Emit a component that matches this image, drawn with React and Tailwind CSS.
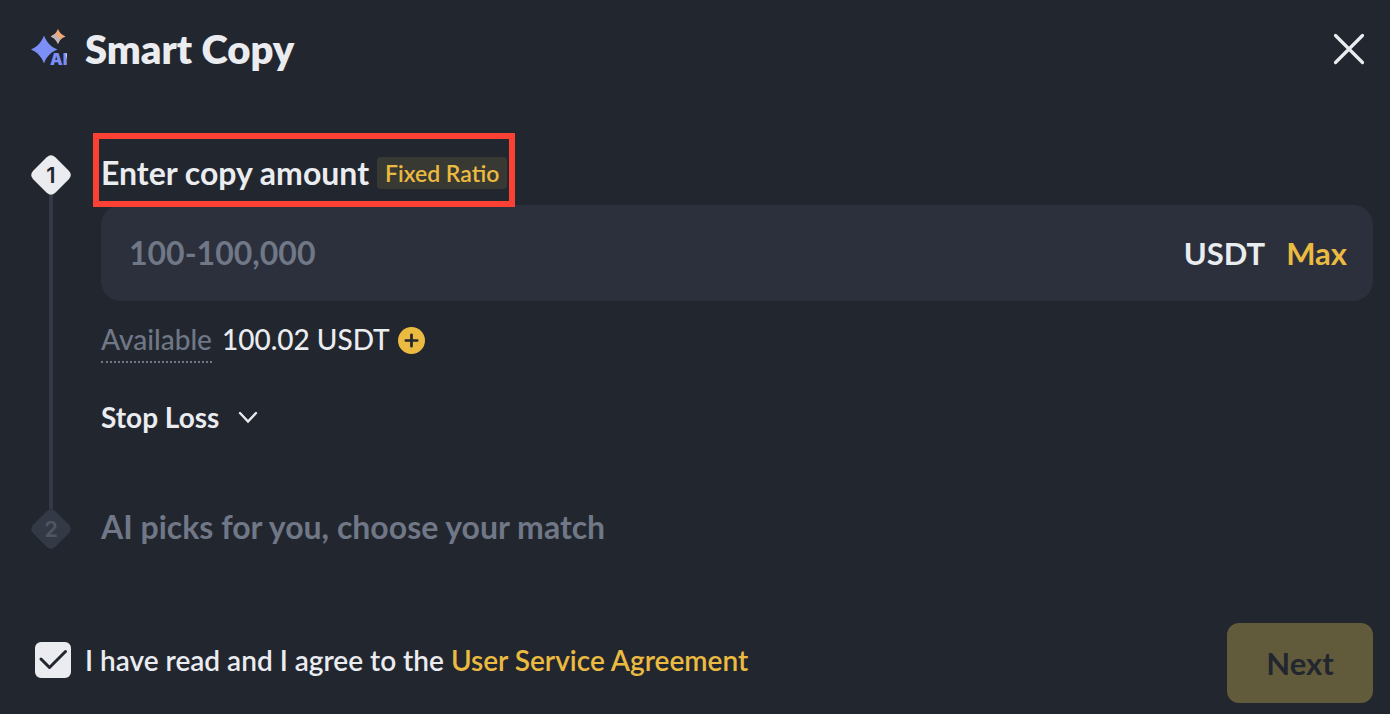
import { useState } from "react";

const SmartCopyIcon = () => (
  <svg width="38" height="40" viewBox="0 0 38 40" aria-hidden="true">
    <path
      d="M13 6.5C15.6 13.2 19 17.2 26.5 20.6C19 23.8 15.6 27.8 13 34.5C10.4 27.8 7 23.8 0 20.6C7 17.2 10.4 13.2 13 6.5Z"
      fill="#7b8ff7"
    />
    <path
      d="M27 0C28.7 3.9 30.5 5.7 34.6 7.5C30.5 9.2 28.7 11.1 27 15C25.3 11.1 23.5 9.2 19.6 7.5C23.5 5.7 25.3 3.9 27 0Z"
      fill="#efa878"
    />
    <path
      d="M27 15C25.3 11.1 23.5 9.2 19.6 7.5C21.4 6.7 22.7 6 23.7 5L29.2 10.5C28.3 11.8 27.7 13.3 27 15Z"
      fill="#b9b7bf"
    />
    <text
      x="19"
      y="36"
      fill="#7b8ff7"
      stroke="#22262f"
      strokeWidth="2"
      paintOrder="stroke"
      className="font-['Inter'] text-[16px] font-black"
    >
      AI
    </text>
    <path d="M34.4 24.6H36V31Z" fill="#cfcfdc" />
  </svg>
);

const StepMarker = ({ number, active }) => (
  <div className="relative flex size-10 shrink-0 items-center justify-center">
    <svg className="absolute inset-0" width="40" height="40" viewBox="0 0 40 40" aria-hidden="true">
      <path
        d="M15.7 2.2Q20-1.8 24.3 2.2L37.8 15.7Q41.8 20 37.8 24.3L24.3 37.8Q20 41.8 15.7 37.8L2.2 24.3Q-1.8 20 2.2 15.7Z"
        fill={active ? "#eaecef" : "#343a45"}
      />
    </svg>
    <span
      className={
        active
          ? "relative font-['Inter',sans-serif] text-[22px] leading-6 font-semibold text-[#22262f]"
          : "relative font-['Inter',sans-serif] text-[22px] leading-6 font-semibold text-[#4f5663]"
      }
    >
      {number}
    </span>
  </div>
);

export default function App() {
  const [amount, setAmount] = useState("");
  const [agreed, setAgreed] = useState(true);

  return (
    <main className="min-h-screen bg-[#22262f] font-['Lato',sans-serif] text-[#eaecef]">
      <header className="flex h-[98px] items-center pr-[25px] pl-[31px]">
        <SmartCopyIcon />
        <h1 className="ml-4 text-[40px] leading-[48px] font-extrabold">Smart Copy</h1>
        <button type="button" aria-label="Close" className="ml-auto">
          <svg width="32" height="32" viewBox="0 0 32 32" fill="none" aria-hidden="true">
            <path d="M2.5 2.5L29.5 29.5M29.5 2.5L2.5 29.5" stroke="#eaecef" strokeWidth="3.2" strokeLinecap="round" />
          </svg>
        </button>
      </header>

      <form className="pt-[43px] pr-[17px] pb-[11px] pl-[31px]" onSubmit={(e) => e.preventDefault()}>
        {/* Step 1 */}
        <section className="flex gap-[30px]">
          <div className="flex flex-col items-center pt-[14px]">
            <StepMarker number={1} active />
            <div className="w-1 flex-1 bg-[#343a45]" />
          </div>

          <div className="min-w-0 flex-1 pb-[58px]">
            <div className="relative flex h-16 w-fit items-center gap-2">
              <label htmlFor="amount" className="text-[32px] leading-10 font-bold">
                Enter copy amount
              </label>
              <span className="rounded bg-[#393933] px-2 text-[23px] leading-8 font-semibold text-[#ebba40]">
                Fixed Ratio
              </span>
              <div className="pointer-events-none absolute -inset-x-2 -top-2 -bottom-[2px] border-[6px] border-[#fb4034]" />
            </div>

            <div className="flex h-24 items-center rounded-[20px] bg-[#2b303c] pr-[26px] pl-7 text-[31px] leading-10 font-bold">
              <input
                id="amount"
                type="text"
                inputMode="decimal"
                placeholder="100-100,000"
                value={amount}
                onChange={(e) => setAmount(e.target.value)}
                className="min-w-0 flex-1 bg-transparent text-[32px] outline-none placeholder:text-[#707786]"
              />
              <span>USDT</span>
              <button type="button" className="ml-[21px] text-[#ebba40]" onClick={() => setAmount("100.02")}>
                Max
              </button>
            </div>

            <div className="mt-[18px] flex items-start text-[28px] leading-10 font-medium">
              <span className="border-b-2 border-dotted border-[#707786] pb-[2px] text-[#707786]">Available</span>
              <span className="ml-[10px]">100.02 USDT</span>
              <button type="button" aria-label="Add funds" className="ml-2 flex h-[42px] items-center">
                <svg width="27" height="27" viewBox="0 0 26 26" aria-hidden="true">
                  <circle cx="13" cy="13" r="13" fill="#ebba40" />
                  <path d="M13 7.5V18.5M7.5 13H18.5" stroke="#22262f" strokeWidth="2.6" strokeLinecap="round" />
                </svg>
              </button>
            </div>

            <button type="button" className="mt-[34px] flex items-center gap-[18px] text-[28px] leading-10 font-bold">
              Stop Loss
              <svg width="22" height="22" viewBox="0 0 22 22" fill="none" aria-hidden="true">
                <path d="M3 7L11 15.5L19 7" stroke="#eaecef" strokeWidth="2.4" strokeLinecap="round" />
              </svg>
            </button>
          </div>
        </section>

        {/* Step 2 */}
        <section className="flex gap-[30px]">
          <div className="flex flex-col items-center">
            <div className="h-[14px] w-1 bg-[#343a45]" />
            <StepMarker number={2} />
          </div>
          <h2 className="flex h-16 items-center text-[32px] leading-10 font-bold text-[#707786]">
            AI picks for you, choose your match
          </h2>
        </section>

        <footer className="mt-16 flex h-20 justify-between pl-1">
          <div className="flex h-[74px] items-center text-[28px] leading-10 font-semibold">
            <span className="relative flex size-9">
              <input
                id="agree"
                type="checkbox"
                checked={agreed}
                onChange={(e) => setAgreed(e.target.checked)}
                className="size-9 appearance-none rounded-md border-2 border-[#eaecef] checked:bg-[#eaecef]"
              />
              {agreed && (
                <svg
                  className="pointer-events-none absolute inset-0"
                  width="36"
                  height="36"
                  viewBox="0 0 36 36"
                  fill="none"
                  aria-hidden="true"
                >
                  <path d="M6 17L14.5 25.5L30.5 9.5" stroke="#22262f" strokeWidth="3" strokeLinecap="round" strokeLinejoin="round" />
                </svg>
              )}
            </span>
            <label htmlFor="agree" className="ml-[14px] whitespace-pre">
              I have read and I agree to the{" "}
            </label>
            <a href="#agreement" className="text-[#ebba40]">
              User Service Agreement
            </a>
          </div>
          <button type="submit" className="h-20 w-[146px] rounded-xl bg-[#625b3b] text-[31px] font-bold text-[#22262f]">
            Next
          </button>
        </footer>
      </form>
    </main>
  );
}
